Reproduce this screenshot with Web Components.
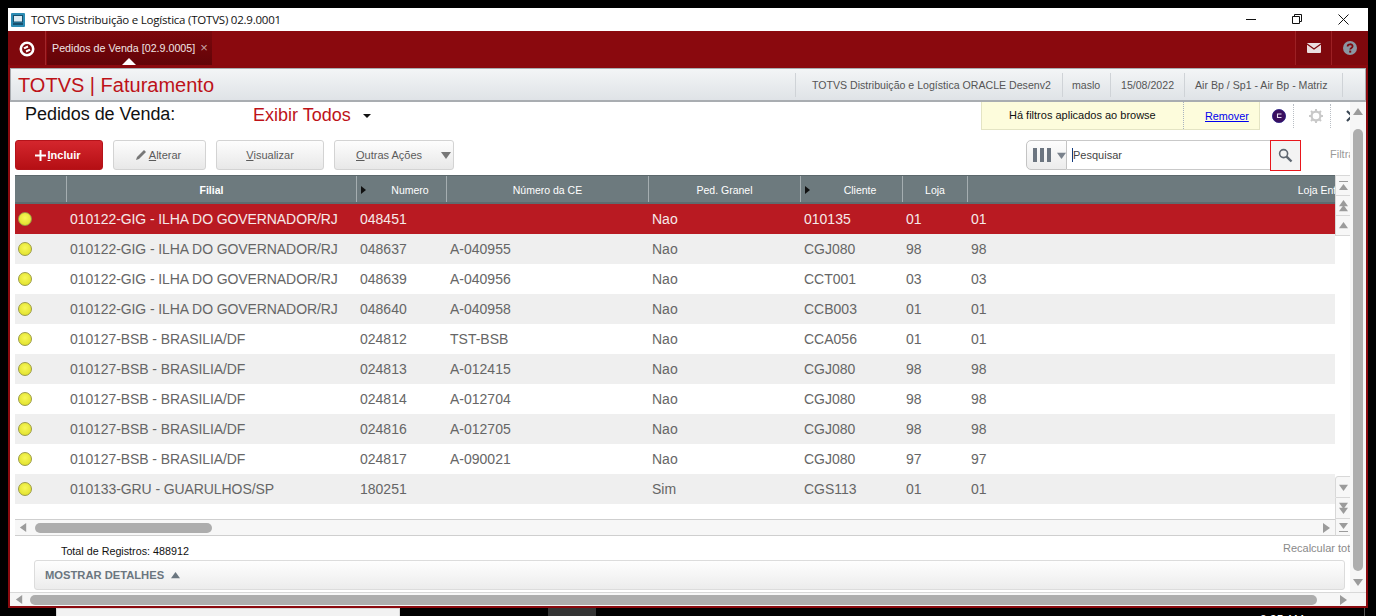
<!DOCTYPE html>
<html lang="pt-BR">
<head>
<meta charset="utf-8">
<title>TOTVS Faturamento</title>
<style>
  html, body { margin: 0; height: 616px; overflow: hidden; background: #000; }
  body { font-family: "Liberation Sans", Arial, sans-serif; }
</style>
</head>
<body>
<app-desktop>
  <win-titlebar>TOTVS Distribuição e Logística (TOTVS) 02.9.0001</win-titlebar>
  <app-topbar>Pedidos de Venda [02.9.0005]</app-topbar>
  <app-frame>
    <app-header>TOTVS | Faturamento</app-header>
    <browse-page></browse-page>
  </app-frame>
</app-desktop>

<script>
// small triangle used by every scrollbar and dropdown
class TriArrow extends HTMLElement {
  constructor() {
    super();
    const dir = this.getAttribute('dir') || 'down';
    const size = this.getAttribute('size') || 9;
    const pts = {
      up: '0,8 5,1 10,8',
      down: '0,2 10,2 5,9',
      left: '8,0 8,10 1,5',
      right: '2,0 2,10 9,5'
    }[dir];
    this.attachShadow({mode: 'open'}).innerHTML = `
    <style>
    :host { display: inline-flex; color: #9b9b9b; }
    svg { display: block; fill: currentColor; }
    </style>
    <svg width="${size}" height="${size}" viewBox="0 0 10 10"><polygon points="${pts}"/></svg>`;
  }
}
customElements.define('tri-arrow', TriArrow);

class AppDesktop extends HTMLElement {
  constructor() {
    super();
    this.attachShadow({mode: 'open'}).innerHTML = `
    <style>
    :host { display: block; height: 616px; padding: 8px 8px 0; box-sizing: border-box; background: #000; }
    .window { display: flex; flex-direction: column; height: 600px; width: 1360px; }
    .taskbar { display: flex; height: 8px; overflow: hidden; }
    .search { width: 344px; margin-left: 56px; background: #f2f2f2; border: 1px solid #d8d8d8; border-bottom: 0; box-sizing: border-box; }
    .active { width: 48px; margin-left: 148px; background: #333; }
    .clock { margin-left: 664px; width: 105px; padding-top: 5px; color: #fff; font: 12px "Liberation Sans", sans-serif; line-height: 14px; border-right: 1px solid #555; box-sizing: border-box; height: 8px; white-space: nowrap; }
    </style>
    <div class="window"><slot></slot></div>
    <div class="taskbar" style="margin: 0 -8px">
      <div class="search"></div>
      <div class="active"></div>
      <div class="clock">8:35 AM</div>
    </div>`;
  }
}
customElements.define('app-desktop', AppDesktop);

class WinTitlebar extends HTMLElement {
  constructor() {
    super();
    this.attachShadow({mode: 'open'}).innerHTML = `
    <style>
    :host { display: flex; align-items: center; height: 23px; background: #fff; color: #111; font: 11.5px "Open Sans", sans-serif; flex: none; }
    .icon { margin: 0 6px 0 3px; flex: none; }
    .title { flex: 1; white-space: nowrap; letter-spacing: -0.22px; }
    .ctl { display: flex; align-items: center; justify-content: center; width: 46px; height: 23px; }
    .ctl svg { display: block; fill: none; stroke: #111; stroke-width: 1; }
    .ctls { display: flex; margin-right: 2px; }
    </style>
    <svg class="icon" width="14" height="14" viewBox="0 0 14 14">
      <rect width="14" height="14" rx="1" fill="#2c8cb4"/>
      <rect x="2.5" y="2.5" width="9" height="6.5" fill="#dbeaf2" stroke="#17506e"/>
      <rect x="2" y="10" width="10" height="2" fill="#17506e"/>
    </svg>
    <span class="title"><slot></slot></span>
    <div class="ctls">
      <div class="ctl"><svg width="11" height="11"><path d="M0 5.5H10"/></svg></div>
      <div class="ctl"><svg width="11" height="11"><path d="M0.5 2.5H7.5V9.5H0.5ZM2.5 2.5V0.5H9.5V7.5H7.5"/></svg></div>
      <div class="ctl"><svg width="11" height="11"><path d="M0.5 0.5L10.5 10.5M10.5 0.5L0.5 10.5"/></svg></div>
    </div>`;
  }
}
customElements.define('win-titlebar', WinTitlebar);

class AppTopbar extends HTMLElement {
  constructor() {
    super();
    this.attachShadow({mode: 'open'}).innerHTML = `
    <style>
    :host { display: flex; height: 35px; background: #8a090e; flex: none; color: #fff; }
    .logo { width: 38px; height: 34px; padding-top: 1px; display: flex; align-items: center; justify-content: center; background: #7f080d; border-right: 1px solid #a0262a; box-sizing: border-box; }
    .tab { position: relative; display: flex; align-items: center; gap: 5px; width: 165px; height: 34px; margin-left: 1px; padding: 0 0 1px 5px; box-sizing: border-box; background: linear-gradient(#7c070c, #620408); font: 10.7px "Liberation Sans", sans-serif; color: #f1e4e4; white-space: nowrap; }
    .close { color: #c9a4a5; font-size: 13px; line-height: 10px; }
    .tab::after { content: ""; position: absolute; left: 75px; bottom: 0; border: 7px solid transparent; border-top: 0; border-bottom-color: #fff; }
    .space { flex: 1; }
    .cell { width: 36px; height: 34px; display: flex; align-items: center; justify-content: center; background: #7f080d; border-left: 1px solid #9c2024; box-sizing: border-box; }
    </style>
    <div class="logo">
      <svg width="16" height="16" viewBox="0 0 16 16">
        <circle cx="8" cy="8" r="6.2" fill="none" stroke="#fff" stroke-width="2.6"/>
        <path d="M4.4 6.6L8.6 4.6L9.4 6.4L5.6 8.2ZM11.6 9.4L7.4 11.4L6.6 9.6L10.4 7.8Z" fill="#fff"/>
      </svg>
    </div>
    <div class="tab"><span><slot></slot></span><span class="close">×</span></div>
    <div class="space"></div>
    <div class="cell">
      <svg width="14" height="10" viewBox="0 0 14 10"><rect width="14" height="10" rx="1" fill="#eadfe0"/><path d="M0 1L7 6L14 1" fill="none" stroke="#7f080d" stroke-width="1.3"/></svg>
    </div>
    <div class="cell" style="width:37px">
      <svg width="14" height="14" viewBox="0 0 14 14"><circle cx="7" cy="7" r="7" fill="#8b97a3"/><path d="M4.6 5.4C4.6 2.6 9.6 2.6 9.6 5.2C9.6 7 7.2 6.8 7.2 8.6" fill="none" stroke="#7f080d" stroke-width="1.8"/><rect x="6.2" y="9.6" width="2" height="2" fill="#7f080d"/></svg>
    </div>`;
  }
}
customElements.define('app-topbar', AppTopbar);

class AppFrame extends HTMLElement {
  constructor() {
    super();
    this.attachShadow({mode: 'open'}).innerHTML = `
    <style>
    :host { display: flex; flex-direction: column; flex: 1; min-height: 0; border: 2px solid #8a090e; background: #fff; }
    </style>
    <slot></slot>`;
  }
}
customElements.define('app-frame', AppFrame);

class AppHeader extends HTMLElement {
  constructor() {
    super();
    const items = [
      ['TOTVS Distribuição e Logística ORACLE Desenv2', 267, 16],
      ['maslo', 48, 9],
      ['15/08/2022', 74, 10],
      ['Air Bp / Sp1 - Air Bp - Matriz', 158, 10]
    ];
    this.attachShadow({mode: 'open'}).innerHTML = `
    <style>
    :host { display: flex; align-items: center; height: 34px; flex: none; box-sizing: border-box; border: 1px solid #a9adb1; border-width: 1px 1px 2px; background: linear-gradient(#f3f5f6, #dfe3e7); }
    h1 { margin: 2px 0 0 7px; flex: 1; font: 20px "Liberation Sans", sans-serif; color: #bd1218; white-space: nowrap; }
    .seg { box-sizing: border-box; height: 24px; line-height: 24px; border-left: 1px solid #cfd3d7; font-size: 10.6px; color: #555; white-space: nowrap; flex: none; }
    .end { width: 23px; height: 24px; border-left: 1px solid #cfd3d7; flex: none; box-sizing: border-box; }
    </style>
    <h1><slot></slot></h1>
    ${items.map(i => `<div class="seg" style="width:${i[1]}px;padding-left:${i[2]}px">${i[0]}</div>`).join('')}
    <div class="end"></div>`;
  }
}
customElements.define('app-header', AppHeader);

class ActionButton extends HTMLElement {
  constructor() {
    super();
    this.attachShadow({mode: 'open'}).innerHTML = `
    <style>
    :host { display: flex; align-items: center; justify-content: center; gap: 2px; box-sizing: border-box; height: 30px; border: 1px solid #d3d3d3; border-radius: 3px; background: linear-gradient(#fdfdfd, #e8e8e8); font-size: 11px; color: #5b5b5b; white-space: nowrap; flex: none; }
    :host([primary]) { border-color: #b5131a; background: linear-gradient(#d4262d, #b50f14); color: #fff; font-weight: bold; gap: 1px; padding-right: 2px; }
    span { display: flex; align-items: center; }
    svg { display: block; flex: none; }
    </style>
    <slot name="icon"></slot><span><slot></slot></span>`;
  }
}
customElements.define('action-button', ActionButton);

class BrowseNotice extends HTMLElement {
  constructor() {
    super();
    this.attachShadow({mode: 'open'}).innerHTML = `
    <style>
    :host { display: flex; align-items: center; box-sizing: border-box; width: 279px; height: 28px; background: #fdfcdc; border: 1px solid #e4e4c4; border-top: 0; font-size: 11px; color: #111; flex: none; }
    .msg { width: 202px; padding-left: 27px; box-sizing: border-box; height: 27px; line-height: 27px; border-right: 1px dotted #a9b3bf; white-space: nowrap; }
    a { margin-left: 21px; font-size: 10.8px; color: #0000ee; text-decoration: underline; }
    </style>
    <span class="msg"><slot></slot></span><a>Remover</a>`;
  }
}
customElements.define('browse-notice', BrowseNotice);

class SearchBox extends HTMLElement {
  constructor() {
    super();
    this.attachShadow({mode: 'open'}).innerHTML = `
    <style>
    :host { display: flex; box-sizing: border-box; width: 275px; height: 31px; flex: none; font-size: 11px; color: #444; }
    .cols { display: flex; align-items: center; gap: 6px; width: 41px; height: 30px; box-sizing: border-box; padding-left: 6px; border: 1px solid #c4c4c4; border-radius: 5px 0 0 5px; background: linear-gradient(#fdfdfd, #ececec); }
    .bars { display: flex; gap: 3px; }
    .bars i { display: block; width: 4px; height: 14px; background: #6c7580; }
    .input { display: flex; align-items: center; width: 203px; height: 30px; box-sizing: border-box; padding-left: 5px; border: 1px solid #c9c9c9; border-left: 0; border-right: 0; }
    .input span { border-left: 1px solid #123a7c; line-height: 14px; margin-right: 1px; }
    .go { display: flex; align-items: center; justify-content: center; width: 31px; height: 31px; box-sizing: border-box; border: 1px solid #e8161c; background: #f3f3f3; padding: 0 1px 1px 0; }
    </style>
    <div class="cols"><div class="bars"><i></i><i></i><i></i></div><tri-arrow size="9" style="color:#7a828c"></tri-arrow></div>
    <div class="input"><span><slot></slot></span></div>
    <div class="go">
      <svg width="15" height="15" viewBox="0 0 15 15"><circle cx="5.6" cy="5.6" r="4" fill="none" stroke="#5f6771" stroke-width="1.6"/><path d="M8.6 8.6L13.5 13.5" stroke="#5f6771" stroke-width="2.4"/></svg>
    </div>`;
  }
}
customElements.define('search-box', SearchBox);

class BrowseGrid extends HTMLElement {
  constructor() {
    super();
    const cols = '52px 290px 90px 202px 152px 102px 65px 720px';
    const head = [['', ''], ['Filial', 'b'], ['Numero', 's'], ['Número da CE', ''], ['Ped. Granel', ''], ['Cliente', 's'], ['Loja', ''], ['Loja Entrega', '']];
    const f = ['010122-GIG - ILHA DO GOVERNADOR/RJ', '010127-BSB - BRASILIA/DF', '010133-GRU - GUARULHOS/SP'];
    const rows = [
      [f[0], '048451', '', 'Nao', '010135', '01', '01'],
      [f[0], '048637', 'A-040955', 'Nao', 'CGJ080', '98', '98'],
      [f[0], '048639', 'A-040956', 'Nao', 'CCT001', '03', '03'],
      [f[0], '048640', 'A-040958', 'Nao', 'CCB003', '01', '01'],
      [f[1], '024812', 'TST-BSB', 'Nao', 'CCA056', '01', '01'],
      [f[1], '024813', 'A-012415', 'Nao', 'CGJ080', '98', '98'],
      [f[1], '024814', 'A-012704', 'Nao', 'CGJ080', '98', '98'],
      [f[1], '024816', 'A-012705', 'Nao', 'CGJ080', '98', '98'],
      [f[1], '024817', 'A-090021', 'Nao', 'CGJ080', '97', '97'],
      [f[2], '180251', '', 'Sim', 'CGS113', '01', '01']
    ];
    const headHtml = head.map(h => `<div class="th ${h[1]}">${h[0]}</div>`).join('');
    const rowHtml = rows.map((r, i) => `
      <div class="tr ${i == 0 ? 'sel' : ''} ${i % 2 ? 'odd' : ''}">
        <div class="td"><span class="dot"></span></div>
        ${r.map((c, n) => `<div class="td ${n == 0 ? 'fil' : ''}">${c}</div>`).join('')}
      </div>`).join('');
    const arrow = (d) => `<tri-arrow dir="${d}" size="9"></tri-arrow>`;
    this.attachShadow({mode: 'open'}).innerHTML = `
    <style>
    :host { display: grid; grid-template-columns: 1320px 16px; grid-template-rows: 344px 17px; margin-left: 5px; width: 1336px; flex: none; }
    .table { overflow: hidden; background: #fff; }
    .head, .tr { display: grid; grid-template-columns: ${cols}; width: 1473px; }
    .head { height: 29px; background: #6d7a7e; border-top: 1px solid #5c686c; border-bottom: 2px solid #5f6b6f; box-sizing: border-box; }
    .th { display: flex; align-items: center; justify-content: center; box-sizing: border-box; padding-top: 2px; border-right: 1px solid #a5aeb1; color: #fff; font-size: 10.5px; white-space: nowrap; position: relative; }
    .th.b { font-weight: bold; }
    .th.s { padding-left: 17px; }
    .th.s::before { content: ""; position: absolute; left: 4px; top: 10px; border: 4px solid transparent; border-left: 5px solid #111; border-right: 0; }
    .tr { height: 30px; background: #fff; color: #666; font-size: 14px; }
    .tr.odd { background: #efefef; }
    .tr.sel { background: #b91a22; color: #f6e9e9; }
    .td { display: flex; align-items: center; padding-left: 3px; white-space: nowrap; }
    .td.fil { letter-spacing: -0.09px; }
    .dot { display: block; width: 14px; height: 14px; box-sizing: border-box; border-radius: 50%; border: 1px solid #9b9b45; background: radial-gradient(circle at 50% 40%, #f8f85a, #dcdc22); }
    .side { display: flex; flex-direction: column; justify-content: space-between; background: #fff; }
    .sb { display: flex; flex-direction: column; align-items: center; justify-content: center; height: 20px; box-sizing: border-box; border: 1px solid #d8d8d8; border-width: 0 1px 1px 1px; background: #f7f7f7; line-height: 0; }
    .sb tri-arrow + tri-arrow { margin-top: -4px; }
    .hbar { display: flex; align-items: center; height: 17px; box-sizing: border-box; border: 1px solid #cfcfcf; border-width: 1px 0; background: #f7f7f7; }
    .hbar .thumb { width: 177px; height: 10px; margin-left: 7px; border-radius: 5px; background: #adadad; }
    .hbar .sp { flex: 1; }
    .hbar tri-arrow:first-child { margin-left: 4px; }
    .hbar tri-arrow:last-child { margin-right: 4px; }
    .corner { background: #f7f7f7; border-left: 1px solid #d8d8d8; border-bottom: 1px solid #cfcfcf; display: flex; align-items: center; justify-content: center; box-sizing: border-box; }
    </style>
    <div class="table">
      <div class="head">${headHtml}</div>
      ${rowHtml}
    </div>
    <div class="side">
      <div>
        <div class="sb" style="height:21px;border-top:1px solid #d8d8d8"><svg width="9" height="10"><rect y="0" width="9" height="1" fill="#9b9b9b"/><polygon points="0,9 4.5,3 9,9" fill="#9b9b9b"/></svg></div>
        <div class="sb">${arrow('up')}${arrow('up')}</div>
        <div class="sb">${arrow('up')}</div>
      </div>
      <div>
        <div class="sb" style="height:22px;border-top:1px solid #d8d8d8;border-radius:3px 0 0 0">${arrow('down')}</div>
        <div class="sb" style="height:21px">${arrow('down')}${arrow('down')}</div>
      </div>
    </div>
    <div class="hbar"><tri-arrow dir="left" size="9"></tri-arrow><div class="thumb"></div><div class="sp"></div><tri-arrow dir="right" size="10"></tri-arrow></div>
    <div class="corner"><svg width="9" height="10"><polygon points="0,1 9,1 4.5,7" fill="#9b9b9b"/><rect y="9" width="9" height="1" fill="#9b9b9b"/></svg></div>`;
  }
}
customElements.define('browse-grid', BrowseGrid);

class BrowsePage extends HTMLElement {
  constructor() {
    super();
    this.attachShadow({mode: 'open'}).innerHTML = `
    <style>
    :host { display: grid; grid-template-columns: 1340px 16px; grid-template-rows: 1fr 14px; flex: 1; min-height: 0; font-size: 11px; }
    .pane { overflow: hidden; display: flex; flex-direction: column; }
    .top { display: flex; align-items: flex-start; height: 38px; width: 1370px; flex: none; }
    .heading { width: 228px; padding: 2px 0 0 15px; font-size: 18px; letter-spacing: -0.05px; color: #111; white-space: nowrap; flex: none; }
    .filter { display: flex; align-items: center; gap: 12px; width: 728px; padding-top: 3px; font-size: 18px; color: #bd1218; white-space: nowrap; flex: none; }
    .icons { display: flex; align-items: center; height: 28px; }
    .icons .sep { width: 0; height: 24px; border-left: 1px dotted #b9bec4; }
    .bar { display: flex; align-items: flex-start; height: 35px; width: 1370px; padding-left: 5px; box-sizing: border-box; gap: 10px; flex: none; }
    .filtra { color: #9a9a9a; font-size: 11px; margin: 8px 0 0 19px; white-space: nowrap; }
    u { text-decoration: underline; }
    .foot { flex: 1; display: flex; flex-direction: column; width: 1370px; min-height: 0; }
    .totals { display: flex; justify-content: space-between; height: 24px; box-sizing: border-box; flex: none; }
    .count { font-size: 10.75px; color: #111; padding: 9px 0 0 51px; }
    .recalc { color: #8a8a8a; font-size: 11px; padding: 6px 0 0 0; width: 97px; white-space: nowrap; }
    .details { display: flex; align-items: center; gap: 7px; width: 1311px; height: 30px; margin-left: 24px; padding-left: 10px; box-sizing: border-box; border: 1px solid #dcdcdc; border-radius: 3px; background: linear-gradient(#fefefe, #ececec); color: #6b7680; font-size: 11.2px; font-weight: bold; white-space: nowrap; }
    .vbar { grid-row: 1; grid-column: 2; display: flex; flex-direction: column; align-items: center; background: #f6f6f6; padding: 5px 0 5px; }
    .vbar .thumb { width: 10px; border-radius: 5px; background: #adadad; flex: 1; margin: 12px 0 6px; }
    .hbar { grid-column: 1 / 3; display: flex; align-items: center; background: #f6f6f6; border-top: 1px solid #d8d8d8; box-sizing: border-box; }
    .hbar tri-arrow:first-child { margin-left: 5px; }
    .hbar .thumb { width: 1287px; height: 10px; margin-left: 6px; border-radius: 5px; background: #adadad; }
    .hbar tri-arrow:last-child { margin-left: 21px; }
    </style>
    <div class="pane">
      <div class="top">
        <div class="heading">Pedidos de Venda:</div>
        <div class="filter">Exibir Todos <svg width="8" height="4" viewBox="0 0 8 4"><polygon points="0,0 8,0 4,4" fill="#111"/></svg></div>
        <browse-notice>Há filtros aplicados ao browse</browse-notice>
        <div class="icons">
          <svg style="margin-left:12px" width="14" height="14" viewBox="0 0 14 14"><circle cx="7" cy="7" r="6.6" fill="#3a0f5e" stroke="#2a1f86" stroke-width=".8"/><path d="M9.5 5H5.5V8.5H9.5" fill="none" stroke="#e8e0f0" stroke-width="1.1"/></svg>
          <div class="sep" style="margin-left:7px"></div>
          <svg style="margin-left:15px" width="14" height="14" viewBox="0 0 14 14"><circle cx="7" cy="7" r="4.4" fill="none" stroke="#c9c9c9" stroke-width="2.2"/><path d="M7 0V3M7 11V14M0 7H3M11 7H14M2 2L4 4M10 10L12 12M12 2L10 4M4 10L2 12" stroke="#c9c9c9" stroke-width="2"/></svg>
          <div class="sep" style="margin-left:7px"></div>
          <svg style="margin-left:15px" width="7" height="12" viewBox="0 0 7 12"><path d="M1 1L6 6L1 11" fill="none" stroke="#3b4754" stroke-width="2.2"/></svg>
        </div>
      </div>
      <div class="bar">
        <action-button primary style="width:88px"><svg slot="icon" width="11" height="11" viewBox="0 0 11 11"><path d="M5.5 0V11M0 5.5H11" stroke="#fff" stroke-width="2"/></svg><u>I</u>ncluir</action-button>
        <action-button style="width:93px;padding-right:3px"><svg slot="icon" width="12" height="12" viewBox="0 0 12 12"><path d="M1 11L2 8L9 1L11 3L4 10Z" fill="#777"/></svg><u>A</u>lterar</action-button>
        <action-button style="width:108px"><u>V</u>isualizar</action-button>
        <action-button style="width:120px;justify-content:flex-start;padding-left:21px"><u>O</u>utras Ações<tri-arrow size="10" style="color:#777;margin-left:19px"></tri-arrow></action-button>
        <search-box style="margin-left:562px">Pesquisar</search-box>
        <div class="filtra">Filtrar</div>
      </div>
      <browse-grid></browse-grid>
      <div class="foot">
        <div class="totals">
          <div class="count">Total de Registros: 488912</div>
          <div class="recalc">Recalcular totais</div>
        </div>
        <div class="details">MOSTRAR DETALHES <tri-arrow dir="up" size="9" style="color:#6b7680"></tri-arrow></div>
      </div>
    </div>
    <div class="vbar">
      <tri-arrow dir="up" size="10"></tri-arrow>
      <div class="thumb"></div>
      <tri-arrow dir="down" size="10"></tri-arrow>
    </div>
    <div class="hbar">
      <tri-arrow dir="left" size="9"></tri-arrow>
      <div class="thumb"></div>
      <tri-arrow dir="right" size="10"></tri-arrow>
    </div>`;
  }
}
customElements.define('browse-page', BrowsePage);
</script>
</body>
</html>
